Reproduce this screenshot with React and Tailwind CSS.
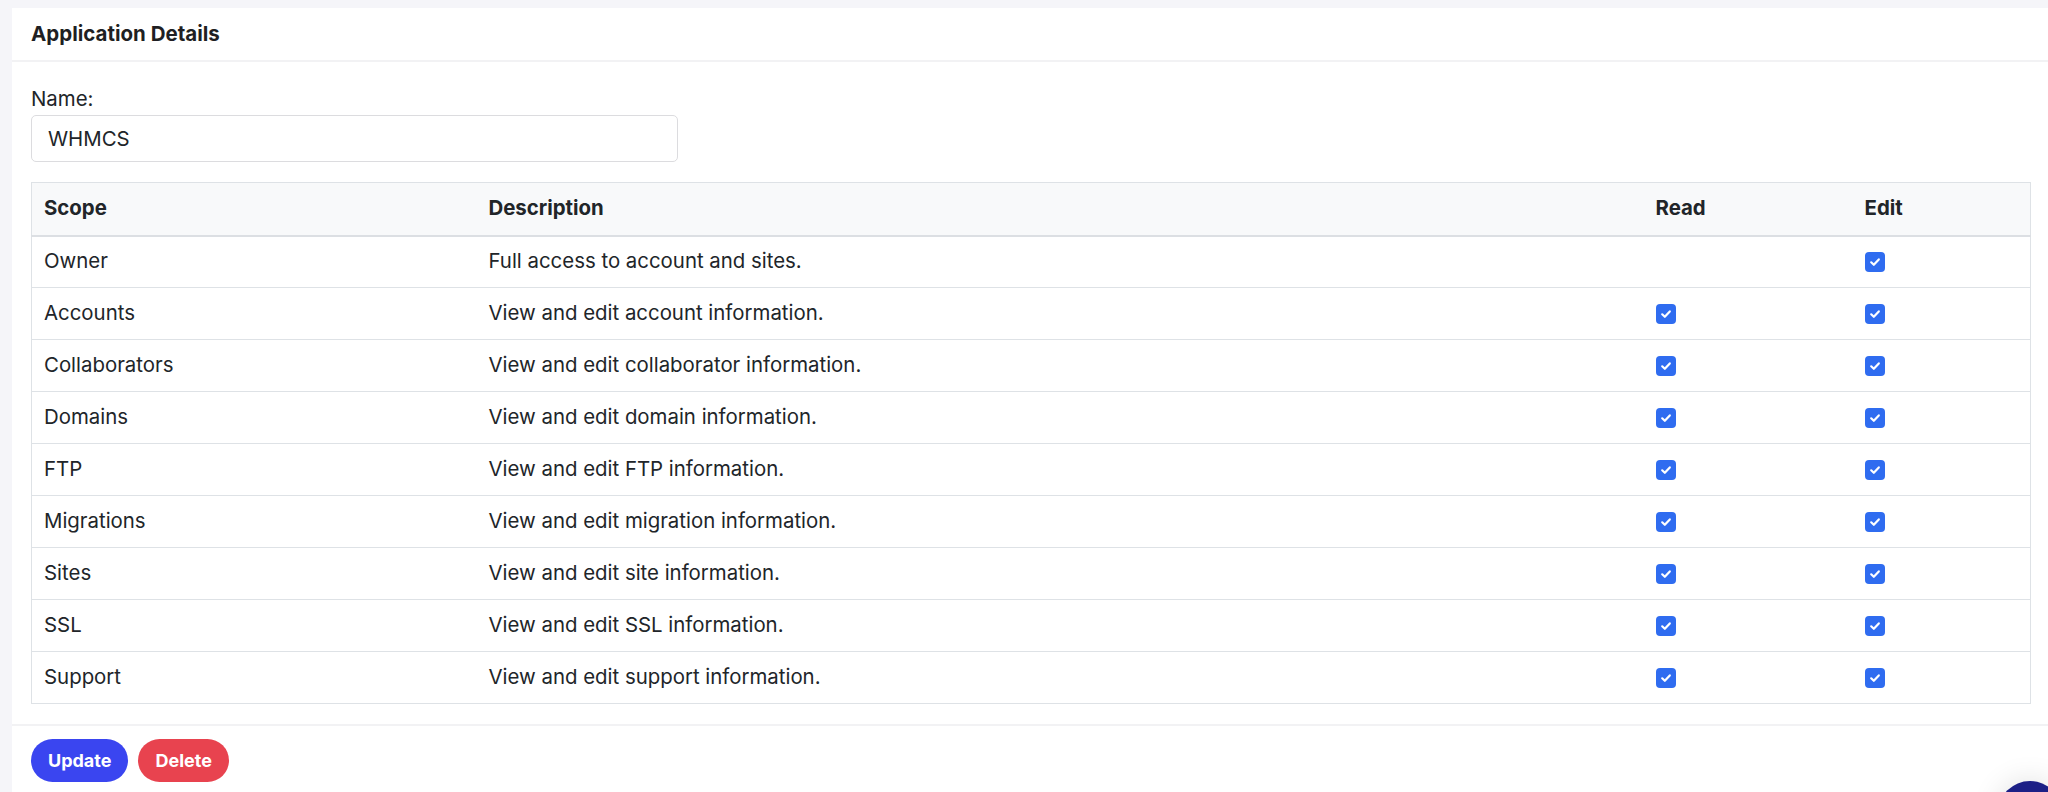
const scopes = [
  { name: "Owner", desc: "Full access to account and sites.", read: false, edit: true },
  { name: "Accounts", desc: "View and edit account information.", read: true, edit: true },
  { name: "Collaborators", desc: "View and edit collaborator information.", read: true, edit: true },
  { name: "Domains", desc: "View and edit domain information.", read: true, edit: true },
  { name: "FTP", desc: "View and edit FTP information.", read: true, edit: true },
  { name: "Migrations", desc: "View and edit migration information.", read: true, edit: true },
  { name: "Sites", desc: "View and edit site information.", read: true, edit: true },
  { name: "SSL", desc: "View and edit SSL information.", read: true, edit: true },
  { name: "Support", desc: "View and edit support information.", read: true, edit: true },
];

function Check() {
  return (
    <span className="inline-flex h-[20px] w-[20px] items-center justify-center rounded-[4px] bg-[#2f6cf0]">
      <svg width="12" height="12" viewBox="0 0 12 12" fill="none">
        <path d="M2.2 6.3 4.8 8.8 9.8 3.4" stroke="#fff" strokeWidth="2.2" strokeLinecap="round" strokeLinejoin="round" />
      </svg>
    </span>
  );
}

export default function App() {
  return (
    <div
      className="relative min-h-screen overflow-hidden bg-[#f5f5f9] pl-3 pt-2 text-[#212529]"
      style={{ fontFamily: "Inter, 'Noto Sans', sans-serif" }}
    >
      <div className="bg-white">

        {/* HEADER */}
        <div className="flex h-[54px] items-center border-b-2 border-[#f2f2f4] pl-[19px] text-[20.5px] font-bold text-[#1f1f23]">
          Application Details
        </div>

        {/* BODY */}
        <div className="pl-[19px] pr-[17px] pt-[24px] pb-[20px] text-[20.4px]">
          <label className="block leading-[25px]">Name:</label>
          <input
            type="text"
            defaultValue="WHMCS"
            className="mt-1 h-[47px] w-[647px] rounded-[5px] border border-[#dcdcdf] px-4 outline-none"
          />

          <table className="mt-5 w-full border-collapse border border-[#dee2e6]">
            <thead>
              <tr className="h-[53px] border-b-2 border-[#dcdfe3] bg-[#f8f9fa]">
                <th className="w-[445px] px-3 text-left font-bold">Scope</th>
                <th className="px-3 text-left font-bold">Description</th>
                <th className="w-[209px] px-3 text-left font-bold">Read</th>
                <th className="w-[178px] px-3 text-left font-bold">Edit</th>
              </tr>
            </thead>
            <tbody>
              {scopes.map((s) => (
                <tr key={s.name} className="h-[52px] border-b border-[#dee2e6]">
                  <td className="px-3">{s.name}</td>
                  <td className="px-3">{s.desc}</td>
                  <td className="px-3 align-middle">{s.read && <span className="flex"><Check /></span>}</td>
                  <td className="px-3 align-middle">{s.edit && <span className="flex"><Check /></span>}</td>
                </tr>
              ))}
            </tbody>
          </table>
        </div>

        {/* FOOTER */}
        <div className="flex gap-[10px] border-t-2 border-[#f2f2f4] pl-[19px] pt-[13px] pb-[14px]">
          <button className="h-[43px] rounded-full bg-[#3a45f0] px-[17px] text-[18px] font-bold text-white">
            Update
          </button>
          <button className="h-[43px] rounded-full bg-[#e8434f] px-[17px] text-[18px] font-bold text-white">
            Delete
          </button>
        </div>
      </div>

      {/* CHAT BUBBLE */}
      <div className="absolute left-[1998px] top-[781px] h-16 w-16 rounded-full bg-[#1c1f86] shadow-[0_0_30px_rgba(0,0,0,0.12)]" />
    </div>
  );
}
